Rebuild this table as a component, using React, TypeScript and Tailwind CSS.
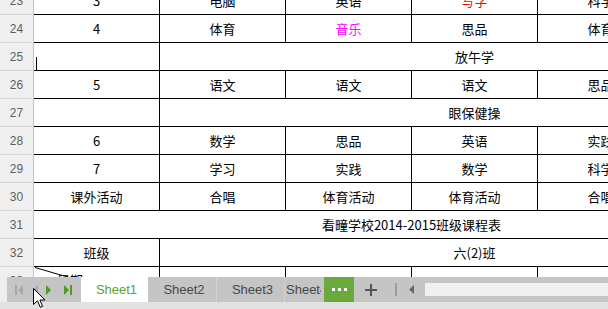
import React from "react";

type C = { t?: string; color?: string; w?: number; kind?: string };

const rows: { n: number; cells: C[] }[] = [
  { n: 23, cells: [{ t: "3" }, { t: "电脑" }, { t: "英语" }, { t: "写字", color: "text-[#ff0000]" }, { t: "科学" }] },
  { n: 24, cells: [{ t: "4" }, { t: "体育" }, { t: "音乐", color: "text-[#ff00ff]" }, { t: "思品" }, { t: "体育" }] },
  { n: 25, cells: [{ t: "", kind: "caret" }, { t: "放午学", w: 5 }] },
  { n: 26, cells: [{ t: "5" }, { t: "语文" }, { t: "语文" }, { t: "语文" }, { t: "思品" }] },
  { n: 27, cells: [{ t: "" }, { t: "眼保健操", w: 5 }] },
  { n: 28, cells: [{ t: "6" }, { t: "数学" }, { t: "思品" }, { t: "英语" }, { t: "实践" }] },
  { n: 29, cells: [{ t: "7" }, { t: "学习" }, { t: "实践" }, { t: "数学" }, { t: "科学" }] },
  { n: 30, cells: [{ t: "课外活动", kind: "thick" }, { t: "合唱" }, { t: "体育活动" }, { t: "体育活动" }, { t: "合唱" }] },
  { n: 31, cells: [{ t: "看疃学校2014-2015班级课程表", w: 6 }] },
  { n: 32, cells: [{ t: "班级" }, { t: "六(2)班", w: 5 }] },
  { n: 33, cells: [{ t: "星期", kind: "diag" }, { t: "" }, { t: "" }, { t: "" }, { t: "" }] },
];

function Cell({ c }: { c: C }) {
  const w = c.w === 5 ? "w-[630px]" : c.w === 6 ? "w-[756px]" : "w-[126px]";
  if (c.kind === "diag") {
    return (
      <div className={`${w} relative shrink-0 h-full border-r border-b border-black flex items-start pl-[23px] pt-[3px] overflow-hidden`}>
        <svg className="absolute left-0 top-0" width="126" height="28">
          <line x1="1" y1="0.5" x2="95" y2="28" stroke="#000" strokeWidth="1" />
        </svg>
        <span className="relative">{c.t}</span>
      </div>
    );
  }
  return (
    <div className={`${w} relative shrink-0 h-full border-r border-b border-black flex items-center justify-center ${c.color ?? "text-black"}`}>
      {c.t}
      {c.kind === "thick" && <div className="absolute left-[2px] right-[-1px] bottom-[-2px] h-[2px] bg-black z-10" />}
      {c.kind === "caret" && <div className="absolute left-[2px] top-[14px] w-[1px] h-[13px] bg-black" />}
    </div>
  );
}

export default function App() {
  return (
    <div className="relative w-[608px] h-[309px] overflow-hidden bg-white flex flex-col">
      <div className="h-[277px] shrink-0 overflow-hidden">
        <div className="-mt-[13px] text-[13px] font-['Noto_Sans_CJK_SC',sans-serif]">
          {rows.map((r) => (
            <div key={r.n} className="flex h-[28px] w-[608px] overflow-hidden">
              <div className="w-[34px] shrink-0 h-full bg-[#efefef] border-r border-b border-r-[#c4c4c4] border-b-[#d6d6d6] flex items-center justify-center text-[12px] text-[#606060] font-['Liberation_Sans',sans-serif]">
                {r.n}
              </div>
              {r.cells.map((c, i) => (
                <Cell key={i} c={c} />
              ))}
            </div>
          ))}
        </div>
      </div>

      <div className="h-[25px] shrink-0 flex bg-[#c5c5c5] text-[13px] font-['Liberation_Sans',sans-serif]">
        <div className="w-[7px] shrink-0 bg-[#eeeeee]" />
        <div className="w-[74px] shrink-0 h-full">
          <svg width="74" height="25" viewBox="0 0 74 25">
            <rect x="8" y="8" width="2" height="10" fill="#a8a8a8" />
            <path d="M16 8 L11 13 L16 18 Z" fill="#a8a8a8" />
            <path d="M31 8 L26 13 L31 18 Z" fill="#a8a8a8" />
            <path d="M39 8 L44 13 L39 18 Z" fill="#4e9a25" />
            <path d="M57 8 L62 13 L57 18 Z" fill="#4e9a25" />
            <rect x="63" y="8" width="2" height="10" fill="#4e9a25" />
          </svg>
        </div>
        <div className="w-[67px] shrink-0 bg-white flex items-center justify-center pl-[4px] text-[#5d9e30]">Sheet1</div>
        <div className="w-[68px] shrink-0 flex items-center justify-center pl-[4px] text-[#484848]">Sheet2</div>
        <div className="w-[1px] shrink-0 bg-[#d3d3d3]" />
        <div className="w-[67px] shrink-0 flex items-center justify-center pl-[4px] text-[#484848]">Sheet3</div>
        <div className="w-[1px] shrink-0 bg-[#d3d3d3]" />
        <div className="w-[36px] shrink-0 overflow-hidden whitespace-nowrap flex items-center pl-[1px] text-[#484848]">Sheet4</div>
        <div className="w-[3px] shrink-0" />
        <div className="w-[30px] shrink-0 bg-[#6aaa3c] flex items-center justify-center gap-[3px]">
          <span className="w-[3px] h-[3px] bg-white" />
          <span className="w-[3px] h-[3px] bg-white" />
          <span className="w-[3px] h-[3px] bg-white" />
        </div>
        <div className="w-[34px] shrink-0 flex items-center justify-center">
          <svg width="12" height="12" viewBox="0 0 12 12">
            <rect x="0" y="5" width="12" height="2" fill="#555" />
            <rect x="5" y="0" width="2" height="12" fill="#555" />
          </svg>
        </div>
        <div className="w-[7px] shrink-0" />
        <div className="w-[2px] h-[13px] self-center shrink-0 bg-[#9c9c9c]" />
        <div className="w-[12px] shrink-0" />
        <div className="w-[5px] shrink-0 flex items-center">
          <svg width="5" height="9" viewBox="0 0 5 9">
            <path d="M5 0 L0 4.5 L5 9 Z" fill="#666" />
          </svg>
        </div>
        <div className="w-[11px] shrink-0" />
        <div className="flex-1 h-[13px] self-center bg-[#f0f0f0]" />
      </div>
      <div className="flex-1 bg-[#e2e2e2]" />

      <svg className="absolute left-[33px] top-[288px]" width="14" height="21" viewBox="0 0 14 21">
        <path d="M0.5 0.5 L0.5 16.5 L4.5 12.8 L7.3 19.3 L9.6 18.3 L6.9 12 L12 12 Z" fill="#fff" stroke="#000" strokeWidth="1" strokeLinejoin="miter" />
      </svg>
    </div>
  );
}
